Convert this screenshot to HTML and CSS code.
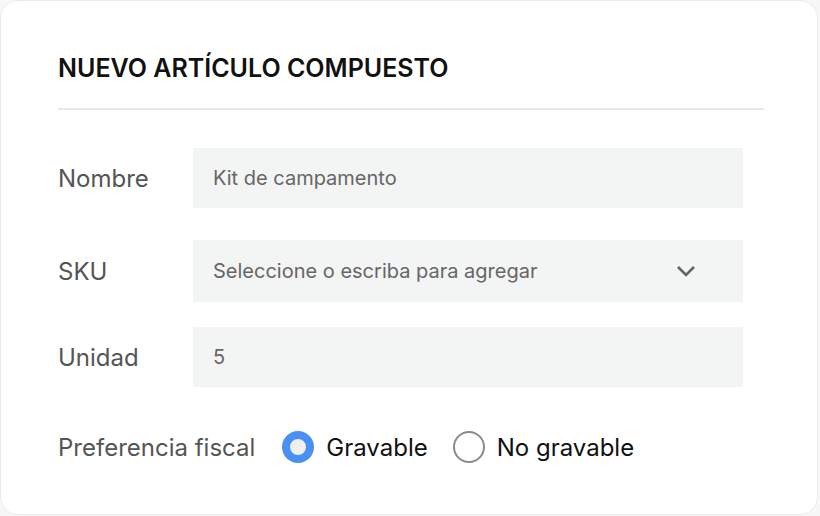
FILE: index.html
```html
<!DOCTYPE html>
<html lang="es">
<head>
  <meta charset="UTF-8" />
  <meta name="viewport" content="width=device-width, initial-scale=1" />
  <title>Nuevo artículo compuesto</title>
  <link rel="stylesheet" href="styles.css">
</head>
<body>

<div class="card">
  <h1 class="card-title">NUEVO ARTÍCULO COMPUESTO</h1>
  <hr class="divider" />

  <div class="field">
    <label class="field-label">Nombre</label>
    <div class="field-input">Kit de campamento</div>
  </div>

  <div class="field field-sku">
    <label class="field-label">SKU</label>
    <div class="field-input select">
      <span>Seleccione o escriba para agregar</span>
      <svg class="chevron" width="20" height="12" viewBox="0 0 20 12">
        <path d="M2 2 L10 10 L18 2" fill="none" stroke="#5f6468" stroke-width="2.6" />
      </svg>
    </div>
  </div>

  <div class="field">
    <label class="field-label">Unidad</label>
    <div class="field-input">5</div>
  </div>

  <!-- Tax preference -->
  <div class="radio-row">
    <span class="field-label">Preferencia fiscal</span>
    <label class="radio-option">
      <span class="radio checked"></span>
      Gravable
    </label>
    <label class="radio-option">
      <span class="radio"></span>
      No gravable
    </label>
  </div>
</div>

</body>
</html>
```

FILE: styles.css
```css
body {
  margin: 0;
  font-family: Inter, 'Noto Sans', sans-serif;
  background-color: #f7f7f7;
  color: #222;
}

.card {
  box-sizing: border-box;
  width: 818px;
  height: 515px;
  background: #fff;
  border: 1px solid #ebebeb;
  border-radius: 18px;
  padding: 52px 53px 0 57px;
}

.card-title {
  margin: 0;
  font-size: 25px;
  line-height: 30px;
  font-weight: 600;
  color: #111;
}

.divider {
  border: none;
  height: 2px;
  background: #e8e8e8;
  margin: 25px 0 38px;
}

.field {
  display: flex;
  align-items: center;
}

.field-label {
  font-size: 24px;
  color: #555;
}

.field .field-label {
  width: 135px;
  flex-shrink: 0;
}

.field-input {
  box-sizing: border-box;
  width: 550px;
  height: 60px;
  background: #f3f4f4;
  padding: 0 20px;
  display: flex;
  align-items: center;
  font-size: 20px;
  color: #666;
}

.field-sku {
  margin: 32px 0 25px;
}

.field-sku .field-input {
  height: 62px;
}

.select {
  justify-content: space-between;
  padding-right: 47px;
}

.radio-row {
  display: flex;
  align-items: center;
  margin-top: 44px;
}

.radio-row .field-label {
  margin-right: 27px;
}

.radio-option {
  display: flex;
  align-items: center;
  gap: 12px;
  font-size: 24px;
  color: #111;
  margin-right: 25px;
}

.radio {
  box-sizing: border-box;
  width: 32px;
  height: 32px;
  border-radius: 50%;
  border: 2px solid #8a8a8a;
  background: #fff;
}

.radio.checked {
  border: 8px solid #4a8ff3;
  background: #eef0f0;
}
```
